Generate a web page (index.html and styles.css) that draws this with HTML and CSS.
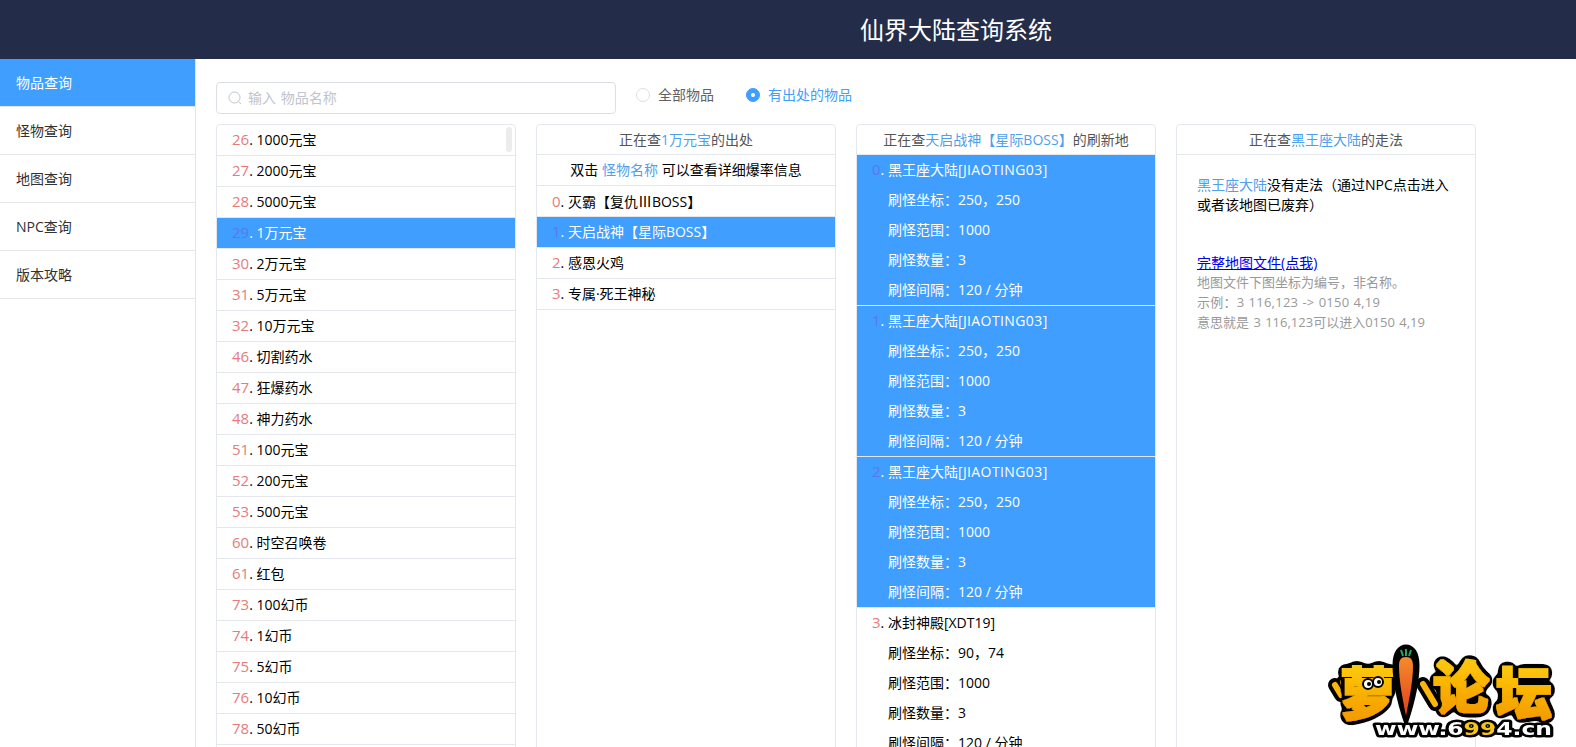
FILE: index.html
```html
<!DOCTYPE html>
<html lang="zh">
<head>
<meta charset="utf-8">
<title>仙界大陆查询系统</title>
<link rel="stylesheet" href="styles.css">
</head>
<body>
<header class="topbar"><h1 class="title">仙界大陆查询系统</h1></header>
<div class="layout">
  <nav class="side">
    <a class="side-item active">物品查询</a>
    <a class="side-item">怪物查询</a>
    <a class="side-item">地图查询</a>
    <a class="side-item">NPC查询</a>
    <a class="side-item">版本攻略</a>
  </nav>
  <main class="main">
    <div class="filters">
      <div class="search">
        <svg class="search-icon" viewBox="0 0 14 14" width="14" height="14"><circle cx="6.5" cy="6.5" r="5.5" fill="none" stroke="#c0c4cc" stroke-width="1"/><path d="M10.5 10.5L13 13" fill="none" stroke="#c0c4cc" stroke-width="1"/></svg>
        <span class="placeholder">输入 物品名称</span>
      </div>
      <div class="radios">
        <label class="radio"><span class="dot"></span>全部物品</label>
        <label class="radio on"><span class="dot"></span>有出处的物品</label>
      </div>
    </div>
    <div class="columns">
      <section class="card">
        <span class="thumb"></span>
        <div class="row"><b class="num">26</b>. 1000元宝</div>
        <div class="row"><b class="num">27</b>. 2000元宝</div>
        <div class="row"><b class="num">28</b>. 5000元宝</div>
        <div class="row sel"><b class="num">29</b>. 1万元宝</div>
        <div class="row"><b class="num">30</b>. 2万元宝</div>
        <div class="row"><b class="num">31</b>. 5万元宝</div>
        <div class="row"><b class="num">32</b>. 10万元宝</div>
        <div class="row"><b class="num">46</b>. 切割药水</div>
        <div class="row"><b class="num">47</b>. 狂爆药水</div>
        <div class="row"><b class="num">48</b>. 神力药水</div>
        <div class="row"><b class="num">51</b>. 100元宝</div>
        <div class="row"><b class="num">52</b>. 200元宝</div>
        <div class="row"><b class="num">53</b>. 500元宝</div>
        <div class="row"><b class="num">60</b>. 时空召唤卷</div>
        <div class="row"><b class="num">61</b>. 红包</div>
        <div class="row"><b class="num">73</b>. 100幻币</div>
        <div class="row"><b class="num">74</b>. 1幻币</div>
        <div class="row"><b class="num">75</b>. 5幻币</div>
        <div class="row"><b class="num">76</b>. 10幻币</div>
        <div class="row"><b class="num">78</b>. 50幻币</div>
      </section>
      <section class="card">
        <div class="card-head">正在查<em class="hl">1万元宝</em>的出处</div>
        <div class="row notice">双击 <em class="hl">怪物名称</em> 可以查看详细爆率信息</div>
        <div class="row"><b class="num">0</b>. 灭霸【复仇<span class="cjk">Ⅲ</span>BOSS】</div>
        <div class="row sel"><b class="num">1</b>. 天启战神【星际BOSS】</div>
        <div class="row"><b class="num">2</b>. 感恩火鸡</div>
        <div class="row"><b class="num">3</b>. 专属·死王神秘</div>
      </section>
      <section class="card">
        <div class="card-head">正在查<em class="hl">天启战神【星际BOSS】</em>的刷新地</div>
        <div class="spawn sel">
          <div class="line"><b class="num">0</b>. 黑王座大陆<span class="en">[JIAOTING03]</span></div>
          <div class="line sub">刷怪坐标：250，250</div>
          <div class="line sub">刷怪范围：1000</div>
          <div class="line sub">刷怪数量：3</div>
          <div class="line sub">刷怪间隔：120 / 分钟</div>
        </div>
        <div class="spawn sel">
          <div class="line"><b class="num">1</b>. 黑王座大陆<span class="en">[JIAOTING03]</span></div>
          <div class="line sub">刷怪坐标：250，250</div>
          <div class="line sub">刷怪范围：1000</div>
          <div class="line sub">刷怪数量：3</div>
          <div class="line sub">刷怪间隔：120 / 分钟</div>
        </div>
        <div class="spawn sel">
          <div class="line"><b class="num">2</b>. 黑王座大陆<span class="en">[JIAOTING03]</span></div>
          <div class="line sub">刷怪坐标：250，250</div>
          <div class="line sub">刷怪范围：1000</div>
          <div class="line sub">刷怪数量：3</div>
          <div class="line sub">刷怪间隔：120 / 分钟</div>
        </div>
        <div class="spawn">
          <div class="line"><b class="num">3</b>. 冰封神殿[XDT19]</div>
          <div class="line sub">刷怪坐标：90，74</div>
          <div class="line sub">刷怪范围：1000</div>
          <div class="line sub">刷怪数量：3</div>
          <div class="line sub">刷怪间隔：120 / 分钟</div>
        </div>
      </section>
      <section class="card">
        <div class="card-head">正在查<em class="hl">黑王座大陆</em>的走法</div>
        <div class="route">
          <p class="route-text"><em class="hl">黑王座大陆</em>没有走法（通过NPC点击进入或者该地图已废弃）</p>
          <a class="map-link" href="#">完整地图文件(点我)</a>
          <p class="route-note">地图文件下图坐标为编号，非名称。<br><span class="gap-wide">示例：3 116,123 -&gt; 0150 4,19</span><br><span class="gap-thin">意思就是 3 116,123可以进入0150 4,19</span></p>
        </div>
      </section>
    </div>
  </main>
</div>
<svg class="logo" viewBox="0 0 266 117" width="266" height="117">
  <defs>
    <linearGradient id="gold" x1="0" y1="0" x2="0" y2="1"><stop offset="0" stop-color="#ffd60a"/><stop offset="1" stop-color="#f29100"/></linearGradient>
    <linearGradient id="carrot" x1="0" y1="0" x2="0" y2="1"><stop offset="0" stop-color="#f78b2c"/><stop offset="1" stop-color="#e0401a"/></linearGradient>
    <filter id="fat" x="-30%" y="-30%" width="160%" height="160%">
      <feMorphology in="SourceGraphic" operator="dilate" radius="1.2" result="body"/>
      <feGaussianBlur in="SourceAlpha" stdDeviation="3.2"/>
      <feComponentTransfer result="edge"><feFuncA type="linear" slope="30" intercept="-1"/></feComponentTransfer>
      <feMerge><feMergeNode in="edge"/><feMergeNode in="body"/></feMerge>
    </filter>
  </defs>
  <path class="logo-line" d="M25 55l6 10M33 52l3 12M36 66l10 7" />
  <path class="logo-fill" d="M25 55l6 10M33 52l3 12M36 66l10 7" />
  <text class="logo-cn" x="30" y="84">萝</text>
  <text class="logo-cn" x="123" y="78">论</text>
  <text class="logo-cn" x="186" y="84">坛</text>
  <path class="logo-line" d="M113 54l12 20"/>
  <path class="logo-fill" d="M113 54l12 20"/>
  <path d="M85 35c0-12 5-18 11-18s11 6 11 18c0 18-5 38-11 56c-6-18-11-38-11-56z" fill="#000" stroke="#000" stroke-width="5"/>
  <path d="M89 36c0-6 2-9 7-9s7 3 7 9c0 16-4 34-7 50c-3-16-7-34-7-50z" fill="url(#carrot)"/>
  <path d="M93 26l-2-6M96 26v-7M99 26l2-6" fill="none" stroke="#27a85f" stroke-width="2"/>
  <circle cx="58" cy="54" r="5" fill="#fff" stroke="#000" stroke-width="2"/>
  <circle cx="68" cy="52" r="5" fill="#fff" stroke="#000" stroke-width="2"/>
  <circle cx="59" cy="54" r="2" fill="#000"/>
  <circle cx="69" cy="52" r="2" fill="#000"/>
  <text class="logo-url" x="65" y="105" textLength="177" lengthAdjust="spacingAndGlyphs">www.6<tspan class="logo-url-y">99</tspan>4.cn</text>
</svg>
</body>
</html>
```
FILE: styles.css
```css
* { box-sizing: border-box; }
html, body { margin: 0; height: 100%; overflow: hidden; }
body {
  font-family: "Open Sans", "Noto Sans CJK SC", sans-serif;
  font-size: 14px;
  color: #000;
  background: #fff;
  display: flex;
  flex-direction: column;
}
.topbar {
  height: 59px;
  flex: none;
  background: #232d4a;
  display: flex;
  align-items: center;
  padding-left: 860px;
}
.title { margin: 0; font-size: 24px; font-weight: 400; line-height: 59px; color: #fff; }
.layout { flex: 1; display: flex; min-height: 0; }
.side { width: 196px; flex: none; border-right: 1px solid #e6e6e6; }
.side-item {
  display: block;
  height: 48px;
  line-height: 47px;
  padding-left: 16px;
  border-bottom: 1px solid #e6e6e6;
  color: #303133;
}
.side-item.active { background: #409eff; color: #fff; }
.main { flex: 1; min-width: 0; padding: 23px 20px 0; overflow: hidden; }
.filters { display: flex; align-items: center; gap: 20px; height: 32px; }
.search {
  width: 400px;
  height: 32px;
  border: 1px solid #dcdfe6;
  border-radius: 4px;
  display: flex;
  align-items: center;
  padding-left: 11px;
  gap: 6px;
}
.search-icon { flex: none; }
.placeholder { color: #c0c4cc; line-height: 28px; word-spacing: 1px; }
.radios { display: flex; gap: 32px; margin-top: -6px; }
.radio { display: flex; align-items: center; gap: 8px; color: #606266; line-height: 20px; }
.dot { width: 14px; height: 14px; border: 1px solid #dcdfe6; border-radius: 50%; display: block; }
.radio.on { color: #409eff; }
.radio.on .dot { background: #409eff; border-color: #409eff; position: relative; }
.radio.on .dot::after {
  content: "";
  position: absolute;
  left: 4px;
  top: 4px;
  width: 4px;
  height: 4px;
  border-radius: 50%;
  background: #fff;
}
.columns { display: flex; gap: 20px; margin-top: 10px; align-items: flex-start; }
.card {
  width: 300px;
  height: 700px;
  flex: none;
  border: 1px solid #e4e7ed;
  border-radius: 4px;
  overflow: hidden;
  position: relative;
}
.thumb {
  position: absolute;
  right: 3px;
  top: 2px;
  width: 6px;
  height: 25px;
  border-radius: 3px;
  background: #ececec;
}
.row {
  height: 31px;
  line-height: 30px;
  padding-left: 15px;
  border-bottom: 1px solid #e4e7ed;
  white-space: nowrap;
}
.row.sel, .spawn.sel { background: #409eff; color: #fff; }
.num { font-weight: 400; font-size: 15px; line-height: 1; color: #e47c7c; }
.sel .num { color: #5b78ee; }
.hl { font-style: normal; color: #4f9fec; }
.cjk { font-family: "Noto Sans CJK SC", sans-serif; }
.en { letter-spacing: 0.4px; }
.card-head {
  height: 30px;
  line-height: 29px;
  text-align: center;
  color: #555;
  border-bottom: 1px solid #e4e7ed;
  white-space: nowrap;
}
.notice { padding-left: 0; text-align: center; }
.spawn { border-bottom: 1px solid #e4e7ed; }
.line { height: 30px; line-height: 30px; padding-left: 15px; white-space: nowrap; }
.line.sub { padding-left: 31px; }
.route { padding: 20px; line-height: 20px; }
.route-text { margin: 0 0 38px; }
.map-link { color: #0000ee; text-decoration: underline; display: block; }
.route-note { margin: -1px 0 0; color: #999; font-size: 13px; }
.gap-wide { letter-spacing: 0.25px; word-spacing: 0.5px; }
.gap-thin { word-spacing: 1px; }
.logo { position: fixed; right: 0; bottom: 0; }
.logo-cn {
  font-family: "Noto Sans CJK SC", sans-serif;
  font-weight: 900;
  font-size: 56px;
  fill: url(#gold);
  filter: url(#fat);
}
.logo-line { fill: none; stroke: #000; stroke-width: 14px; stroke-linecap: round; }
.logo-fill { fill: none; stroke: #fbb60c; stroke-width: 6px; stroke-linecap: round; }
.logo-url {
  font-family: "DejaVu Sans", sans-serif;
  font-weight: 700;
  font-size: 18px;
  fill: #fff;
  stroke: #000;
  stroke-width: 5px;
  stroke-linejoin: round;
  paint-order: stroke;
}
.logo-url-y { fill: #f5c518; }
```
